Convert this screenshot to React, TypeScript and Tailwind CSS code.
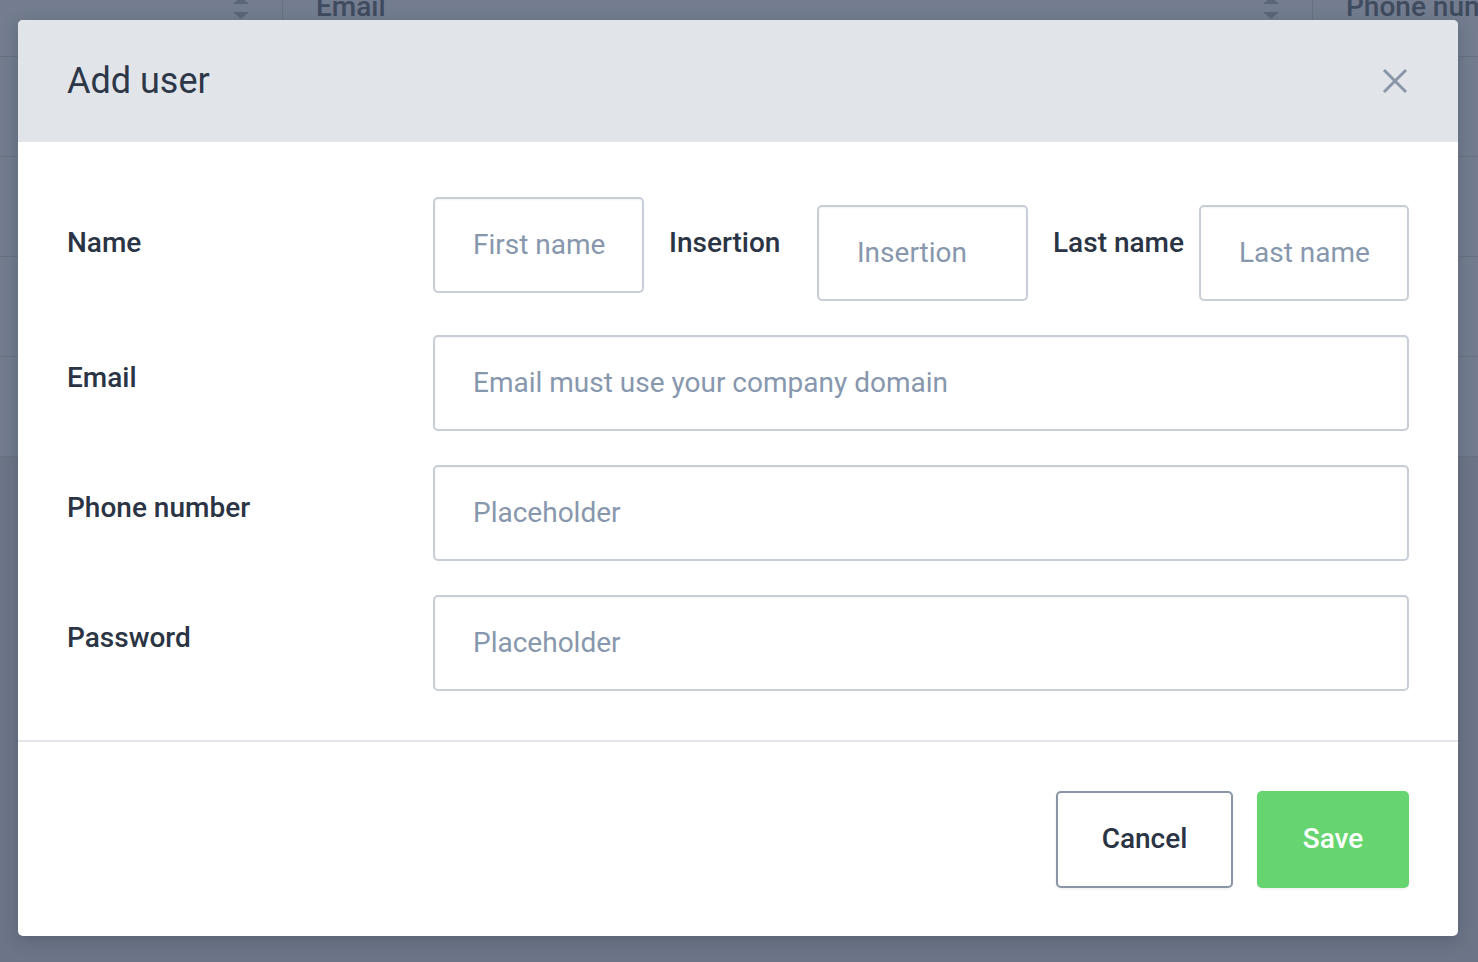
import React from 'react';

const font = { fontFamily: 'Roboto, "Noto Sans", sans-serif' };

function SortIcon() {
    return (
        <svg width="18" height="26" viewBox="0 0 18 26" className="-mt-[4px] shrink-0">
            <path d="M9 1 L17 8 L1 8 Z" fill="#5b6679" />
            <path d="M1 16 L17 16 L9 23 Z" fill="#5b6679" />
        </svg>
    );
}

function BackgroundTable() {
    const rows = [0, 1, 2, 3];
    return (
        <div className="w-full">
            <div className="h-[57px] bg-[#737d8f] border-b border-[#67717f] flex overflow-hidden">
                <div className="w-[283px] shrink-0 flex justify-end pr-[32px] border-r border-[#67717f]">
                    <SortIcon />
                </div>
                <div className="w-[1030px] shrink-0 flex justify-between border-r border-[#67717f]">
                    <span className="pl-[33px] -mt-[11px] text-[28px] leading-[36px] font-medium text-[#3f4b5e]">Email</span>
                    <div className="pr-[32px]">
                        <SortIcon />
                    </div>
                </div>
                <span className="shrink-0 pl-[33px] -mt-[11px] text-[28px] leading-[36px] font-medium text-[#3f4b5e] whitespace-nowrap">Phone number</span>
            </div>
            {rows.map(r => (
                <div key={r} className="h-[100px] bg-[#727c8e] border-b border-[#67717f]" />
            ))}
        </div>
    );
}

function Field({ placeholder, className = '' }: { placeholder: string; className?: string }) {
    return (
        <div className={`h-[96px] rounded-[5px] border-2 border-[#c8ced8] bg-white flex items-center pl-[38px] shadow-[inset_0_1px_2px_rgba(0,0,0,0.05)] ${className}`}>
            <span className="text-[28px] text-[#8797ad] whitespace-nowrap">{placeholder}</span>
        </div>
    );
}

function Label({ children, className = '' }: { children: React.ReactNode; className?: string }) {
    return (
        <div className={`shrink-0 text-[28px] leading-[36px] font-medium text-[#2a3444] whitespace-nowrap ${className}`}>
            {children}
        </div>
    );
}

export default function App() {
    return (
        <div className="relative w-[1478px] h-[962px] overflow-hidden bg-[#6c7587]" style={font}>
            <BackgroundTable />

            <div className="absolute inset-0 px-[18px] pt-[20px]">
                <div className="w-[1440px] h-[916px] bg-white rounded-[5px] shadow-[0_4px_16px_rgba(30,40,60,0.25)] overflow-hidden flex flex-col">
                    {/* header */}
                    <div className="h-[122px] bg-[#e1e5ea] flex items-center justify-between pl-[49px] pr-[50px]">
                        <h2 className="text-[36px] text-[#2d3748] font-normal">Add user</h2>
                        <svg width="26" height="26" viewBox="0 0 26 26">
                            <path d="M2 2 L24 24 M24 2 L2 24" stroke="#8a96a8" strokeWidth="3" />
                        </svg>
                    </div>

                    {/* body */}
                    <div className="h-[598px] px-[49px] pt-[55px] flex flex-col gap-[34px]">
                        <div className="flex">
                            <Label className="w-[366px] pt-[28px]">Name</Label>
                            <Field placeholder="First name" className="w-[211px] shrink-0" />
                            <Label className="w-[148px] ml-[25px] pt-[28px]">Insertion</Label>
                            <Field placeholder="Insertion" className="w-[211px] shrink-0 mt-[8px]" />
                            <Label className="w-[146px] ml-[25px] pt-[28px]">Last name</Label>
                            <Field placeholder="Last name" className="flex-1 mt-[8px]" />
                        </div>
                        <div className="flex">
                            <Label className="w-[366px] pt-[25px]">Email</Label>
                            <Field placeholder="Email must use your company domain" className="flex-1" />
                        </div>
                        <div className="flex">
                            <Label className="w-[366px] pt-[25px]">Phone number</Label>
                            <Field placeholder="Placeholder" className="flex-1" />
                        </div>
                        <div className="flex">
                            <Label className="w-[366px] pt-[25px]">Password</Label>
                            <Field placeholder="Placeholder" className="flex-1" />
                        </div>
                    </div>

                    <div className="h-[2px] bg-[#e2e6ec]" />

                    {/* footer */}
                    <div className="flex-1 flex items-center justify-end gap-[24px] px-[49px]">
                        <button className="w-[177px] h-[97px] rounded-[5px] border-2 border-[#8a96a8] bg-white text-[28px] font-medium text-[#2a3444] shadow-[0_1px_3px_rgba(0,0,0,0.08)]">
                            Cancel
                        </button>
                        <button className="w-[152px] h-[97px] rounded-[5px] bg-[#66d570] text-[28px] font-medium text-white shadow-[0_1px_3px_rgba(0,0,0,0.08)]">
                            Save
                        </button>
                    </div>
                </div>
            </div>
        </div>
    );
}
